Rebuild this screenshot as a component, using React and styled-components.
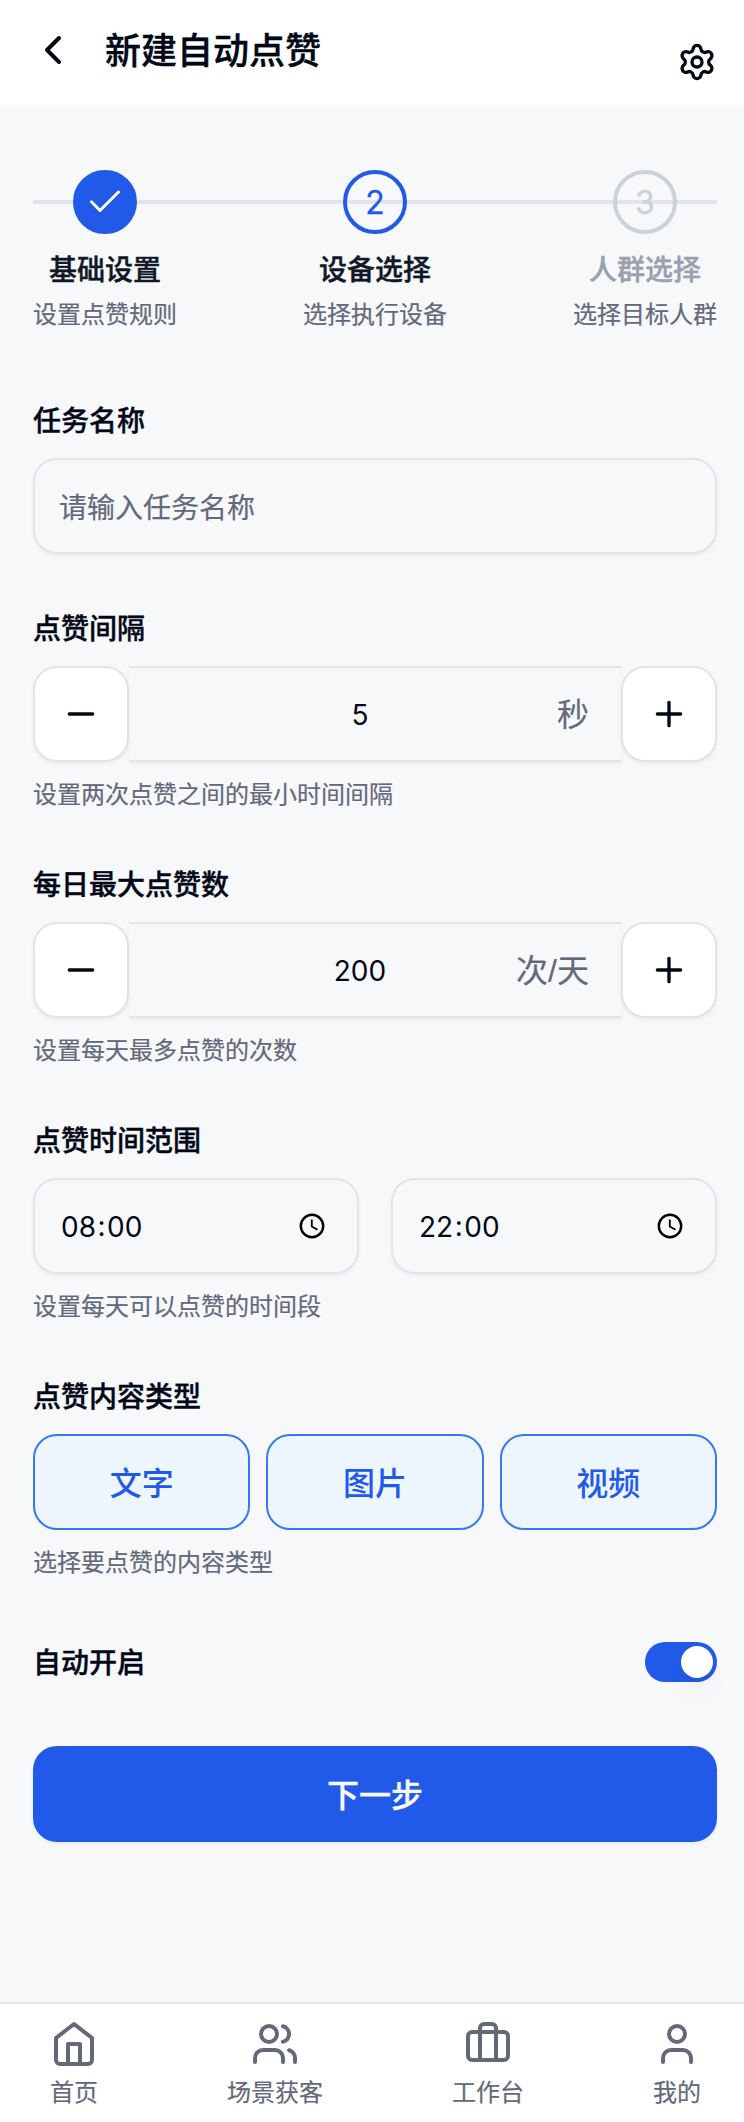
import React, { useState } from 'react';
import styled, { createGlobalStyle, css } from 'styled-components';
import { ChevronLeft, Settings, Minus, Plus } from 'lucide-react';

const Global = createGlobalStyle`
  * { box-sizing: border-box; }
  body { margin: 0; background: #f7f8fa; }
  button, input { font: inherit; color: inherit; }
`;

const emphasis = css`
  font-weight: 500;
  -webkit-text-stroke: 0.4px currentColor;
`;

const muted = css`
  color: #64697a;
  -webkit-text-stroke: 0.2px currentColor;
`;

const Page = styled.div`
  width: 744px;
  height: 2122px;
  display: flex;
  flex-direction: column;
  background: #f7f8fa;
  color: #020817;
  font-family: Inter, "Noto Sans CJK SC", sans-serif;
`;

const Header = styled.header`
  height: 106px;
  padding: 0 27px 0 29px;
  display: flex;
  align-items: flex-start;
  background: #fff;
`;

const IconButton = styled.button`
  display: flex;
  padding: 0;
  border: 0;
  background: none;
  margin-top: ${(p) => p.$top}px;
`;

const Title = styled.h1`
  flex: 1;
  margin: 25px 0 0 28px;
  font-size: 36px;
  line-height: 52px;
  ${emphasis}
`;

const Main = styled.main`
  flex: 1;
  padding: 64px 27px 0 33px;
`;

const Steps = styled.ol`
  list-style: none;
  margin: 0 0 76px;
  padding: 0;
  display: flex;
  justify-content: space-between;
  background: linear-gradient(#e1e4ea, #e1e4ea) 0 30px / 100% 4px no-repeat;
`;

const Step = styled.li`
  width: 144px;
  display: flex;
  flex-direction: column;
  align-items: center;
`;

const tones = {
  done: { ring: '#2159e9', fill: '#2159e9', ink: '#fff', text: '#101828' },
  current: { ring: '#2159e9', fill: 'transparent', ink: '#2159e9', text: '#101828' },
  pending: { ring: '#cdd1d8', fill: 'transparent', ink: '#cdd1d8', text: '#99a1af' },
};

const StepDot = styled.span`
  width: 64px;
  height: 64px;
  display: flex;
  align-items: center;
  justify-content: center;
  border: 4px solid ${(p) => tones[p.$state].ring};
  border-radius: 50%;
  background: ${(p) => tones[p.$state].fill};
  color: ${(p) => tones[p.$state].ink};
  font-size: 32px;
  -webkit-text-stroke: 0.3px currentColor;
`;

const StepName = styled.span`
  margin-top: 16px;
  font-size: 28px;
  line-height: 41px;
  color: ${(p) => tones[p.$state].text};
  ${emphasis}
`;

const StepNote = styled.span`
  margin-top: 8px;
  font-size: 24px;
  line-height: 31px;
  white-space: nowrap;
  ${muted}
`;

const Field = styled.section`
  display: flex;
  flex-direction: column;
  margin-bottom: ${(p) => p.$gap || 60}px;
`;

const Label = styled.label`
  padding-top: 1px;
  margin-bottom: 23px;
  font-size: 28px;
  line-height: 28px;
  ${emphasis}
`;

const Hint = styled.p`
  margin: 17px 0 0;
  font-size: 24px;
  line-height: 31px;
  ${muted}
`;

const Row = styled.div`
  display: flex;
  gap: ${(p) => p.$gap || 0}px;
`;

const TextInput = styled.input`
  height: 96px;
  padding: 3px 24px 0;
  border: 2px solid #e2e4ea;
  border-radius: 24px;
  background: transparent;
  box-shadow: 0 2px 4px rgba(0, 0, 0, 0.05);
  font-size: 28px;
  outline: none;
  &::placeholder { opacity: 1; ${muted} }
`;

const StepButton = styled.button`
  width: 96px;
  height: 96px;
  display: flex;
  align-items: center;
  justify-content: center;
  border: 2px solid #e2e4ea;
  border-radius: 24px;
  background: #fff;
  box-shadow: 0 2px 4px rgba(0, 0, 0, 0.05);
`;

const Amount = styled.div`
  flex: 1;
  height: 96px;
  display: grid;
  grid-template-columns: 1fr;
  align-items: center;
  border: solid #e2e4ea;
  border-width: 2px 0;
  box-shadow: 0 2px 4px rgba(0, 0, 0, 0.05);
  & > * { grid-area: 1 / 1; }
`;

const AmountValue = styled.span`
  padding: 1px 30px 0 0;
  text-align: center;
  font-size: 28px;
`;

const Unit = styled.span`
  justify-self: end;
  padding: 2px 32px 0 0;
  font-family: "Liberation Sans", "Noto Sans CJK SC", sans-serif;
  font-size: 32px;
  line-height: 48px;
  ${muted}
`;

const TimeBox = styled.div`
  flex: 1;
  height: 96px;
  display: flex;
  align-items: center;
  justify-content: space-between;
  padding: 0 32px 0 26px;
  border: 2px solid #e2e4ea;
  border-radius: 24px;
  box-shadow: 0 2px 4px rgba(0, 0, 0, 0.05);
  font-size: 28px;
`;

const Colon = styled.span`
  padding: 0 1.5px;
  vertical-align: 1px;
`;

const TypeButton = styled.button`
  flex: 1;
  height: 96px;
  padding: 0 0 3px;
  border: 2px solid #3479f0;
  border-radius: 24px;
  background: #edf5ff;
  color: #2159e9;
  font-size: 32px;
  font-weight: 500;
`;

const SwitchRow = styled.div`
  height: 40px;
  margin-bottom: 64px;
  display: flex;
  align-items: center;
  justify-content: space-between;
  font-size: 28px;
`;

const SwitchLabel = styled.span`
  padding-bottom: 2px;
  ${emphasis}
`;

const Switch = styled.button`
  width: 72px;
  height: 40px;
  padding: 4px;
  display: flex;
  justify-content: ${(p) => (p.$on ? 'flex-end' : 'flex-start')};
  border: 0;
  border-radius: 20px;
  background: ${(p) => (p.$on ? '#2159e9' : '#e2e4ea')};
`;

const Thumb = styled.span`
  width: 32px;
  height: 32px;
  border-radius: 50%;
  background: #fff;
  box-shadow: 0 20px 30px -6px rgba(0, 0, 0, 0.07), 0 8px 12px -4px rgba(0, 0, 0, 0.04);
`;

const NextButton = styled.button`
  width: 100%;
  height: 96px;
  padding: 0 0 3px;
  border: 0;
  border-radius: 24px;
  background: #2159e9;
  color: #f8fafc;
  box-shadow: 0 2px 4px rgba(0, 0, 0, 0.05);
  font-size: 32px;
  ${emphasis}
`;

const TabBar = styled.nav`
  height: 120px;
  padding: 16px 43px 0 50px;
  display: flex;
  justify-content: space-between;
  align-items: flex-start;
  border-top: 2px solid #e2e5e9;
  background: #fff;
`;

const Tab = styled.a`
  display: flex;
  flex-direction: column;
  align-items: center;
  gap: 9px;
  font-size: 24px;
  line-height: 32px;
  ${muted}
`;

const Glyph = ({ children }) => (
  <svg width="48" height="48" viewBox="0 0 24 24" fill="none" stroke="currentColor"
    strokeWidth="2" strokeLinecap="round" strokeLinejoin="round">{children}</svg>
);

const Clock = () => (
  <svg width="26" height="26" viewBox="0 0 26 26" fill="none" stroke="#000" strokeWidth="2.4">
    <circle cx="13" cy="13" r="11.2" />
    <path d="M12.8 6.5V13.5L18.5 16.8" strokeWidth="1.8" />
  </svg>
);

const steps = [
  { state: 'done', name: '基础设置', note: '设置点赞规则' },
  { state: 'current', name: '设备选择', note: '选择执行设备' },
  { state: 'pending', name: '人群选择', note: '选择目标人群' },
];

const tabs = [
  { name: '首页', icon: <><path d="m3 9 9-7 9 7v11a2 2 0 0 1-2 2H5a2 2 0 0 1-2-2z" /><path d="M9 22V12h6v10" /></> },
  { name: '场景获客', icon: <><path d="M16 21v-2a4 4 0 0 0-4-4H6a4 4 0 0 0-4 4v2" /><circle cx="9" cy="7" r="4" /><path d="M22 21v-2a4 4 0 0 0-3-3.87" /><path d="M16 3.13a4 4 0 0 1 0 7.75" /></> },
  { name: '工作台', icon: <><path d="M16 20V4a2 2 0 0 0-2-2h-4a2 2 0 0 0-2 2v16" /><rect x="2" y="6" width="20" height="14" rx="2" /></> },
  { name: '我的', icon: <><path d="M19 21v-2a4 4 0 0 0-4-4H9a4 4 0 0 0-4 4v2" /><circle cx="12" cy="7" r="4" /></> },
];

function TimeField({ hour, minute }) {
  return (
    <TimeBox>
      <span>{hour}<Colon>:</Colon>{minute}</span>
      <Clock />
    </TimeBox>
  );
}

function Stepper({ label, hint, unit, initial, step }) {
  const [value, setValue] = useState(initial);
  return (
    <Field>
      <Label>{label}</Label>
      <Row>
        <StepButton onClick={() => setValue(Math.max(step, value - step))}><Minus size={40} /></StepButton>
        <Amount>
          <AmountValue>{value}</AmountValue>
          <Unit>{unit}</Unit>
        </Amount>
        <StepButton onClick={() => setValue(value + step)}><Plus size={40} /></StepButton>
      </Row>
      <Hint>{hint}</Hint>
    </Field>
  );
}

export default function App() {
  const [on, setOn] = useState(true);
  return (
    <Page>
      <Global />
      <Header>
        <IconButton $top={26}><ChevronLeft size={48} /></IconButton>
        <Title>新建自动点赞</Title>
        <IconButton $top={42}><Settings size={40} /></IconButton>
      </Header>
      <Main>
        <Steps>
          {steps.map((s, i) => (
            <Step key={s.name}>
              <StepDot $state={s.state}>
                {s.state === 'done' ? (
                  <svg width="32" height="24" viewBox="0 0 32 24" fill="none" stroke="currentColor"
                    strokeWidth="3" strokeLinecap="round" strokeLinejoin="round">
                    <path d="M2.5 11.8L11 20.5L29.5 2" />
                  </svg>
                ) : i + 1}
              </StepDot>
              <StepName $state={s.state}>{s.name}</StepName>
              <StepNote>{s.note}</StepNote>
            </Step>
          ))}
        </Steps>
        <Field>
          <Label>任务名称</Label>
          <TextInput placeholder="请输入任务名称" />
        </Field>
        <Stepper label="点赞间隔" hint="设置两次点赞之间的最小时间间隔" unit="秒" initial={5} step={1} />
        <Stepper label="每日最大点赞数" hint="设置每天最多点赞的次数" unit="次/天" initial={200} step={10} />
        <Field>
          <Label>点赞时间范围</Label>
          <Row $gap={32}>
            <TimeField hour="08" minute="00" />
            <TimeField hour="22" minute="00" />
          </Row>
          <Hint>设置每天可以点赞的时间段</Hint>
        </Field>
        <Field $gap={64}>
          <Label>点赞内容类型</Label>
          <Row $gap={16}>
            {['文字', '图片', '视频'].map((t) => <TypeButton key={t}>{t}</TypeButton>)}
          </Row>
          <Hint>选择要点赞的内容类型</Hint>
        </Field>
        <SwitchRow>
          <SwitchLabel>自动开启</SwitchLabel>
          <Switch $on={on} onClick={() => setOn(!on)}><Thumb /></Switch>
        </SwitchRow>
        <NextButton>下一步</NextButton>
      </Main>
      <TabBar>
        {tabs.map((t) => (
          <Tab key={t.name}><Glyph>{t.icon}</Glyph>{t.name}</Tab>
        ))}
      </TabBar>
    </Page>
  );
}
